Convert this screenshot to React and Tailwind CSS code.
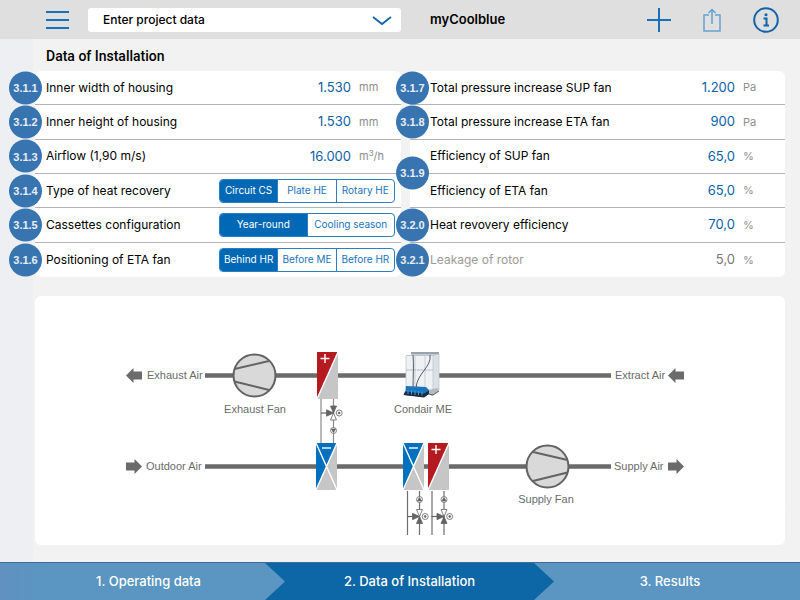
import clsx from "clsx";

const leftRows = [
    { badge: "3.1.1", label: "Inner width of housing", value: "1.530", unit: "mm" },
    { badge: "3.1.2", label: "Inner height of housing", value: "1.530", unit: "mm" },
    { badge: "3.1.3", label: "Airflow (1,90 m/s)", value: "16.000", unit: <>m<sup className="text-[8px]">3</sup>/h</> },
    { badge: "3.1.4", label: "Type of heat recovery", options: ["Circuit CS", "Plate HE", "Rotary HE"] },
    { badge: "3.1.5", label: "Cassettes configuration", options: ["Year-round", "Cooling season"] },
    { badge: "3.1.6", label: "Positioning of ETA fan", options: ["Behind HR", "Before ME", "Before HR"] },
];

const rightRows = [
    { badge: "3.1.7", label: "Total pressure increase SUP fan", value: "1.200", unit: "Pa" },
    { badge: "3.1.8", label: "Total pressure increase ETA fan", value: "900", unit: "Pa" },
    { badge: "3.1.9", label: "Efficiency of SUP fan", value: "65,0", unit: "%", shared: true },
    { label: "Efficiency of ETA fan", value: "65,0", unit: "%" },
    { badge: "3.2.0", label: "Heat revovery efficiency", value: "70,0", unit: "%" },
    { badge: "3.2.1", label: "Leakage of rotor", value: "5,0", unit: "%", disabled: true },
];

const Segmented = ({ name, options }) => (
    <div role="radiogroup" aria-label={name} className="mr-1.5 flex h-6 w-44 overflow-hidden rounded border border-[#2b7fc1] divide-x divide-[#2b7fc1]">
        {options.map((option, i) => (
            <label
                key={option}
                className="flex flex-1 cursor-pointer items-center justify-center whitespace-nowrap text-[10px] text-[#1a74bb] has-checked:bg-[#0068b4] has-checked:text-white"
            >
                <input type="radio" name={name} defaultChecked={i === 0} className="sr-only" />
                {option}
            </label>
        ))}
    </div>
);

const Row = ({ row, side }) => {
    const id = row.label.toLowerCase().replace(/[^a-z]+/g, "-");
    return (
        <div
            className={clsx(
                "relative flex items-center border-b border-[#b4b4b4] last:border-b-0",
                side === "left" ? "pl-[11px]" : "pl-5"
            )}
        >
            {row.badge && (
                <span
                    className={clsx(
                        "absolute z-10 flex size-[33px] -translate-y-1/2 items-center justify-center rounded-full bg-[#3875b0] font-['Liberation_Sans',sans-serif] text-[11px] font-bold text-[#e8eef5]",
                        side === "left" ? "-left-[26px]" : "-left-[14px]",
                        row.shared ? "top-full" : "top-1/2"
                    )}
                >
                    {row.badge}
                </span>
            )}
            {row.options ? (
                <>
                    <span className="flex-1 whitespace-nowrap">{row.label}</span>
                    <Segmented name={row.label} options={row.options} />
                </>
            ) : (
                <>
                    <label htmlFor={id} className={clsx("flex-1 whitespace-nowrap", row.disabled && "text-[#9a9a9a]")}>
                        {row.label}
                    </label>
                    <input
                        id={id}
                        type="text"
                        defaultValue={row.value}
                        disabled={row.disabled}
                        className="w-16 bg-transparent text-right text-[13px] text-[#0b62a9] disabled:text-[#777]"
                    />
                    <span className="w-[50px] pl-2 text-[11px] text-[#8e8e8e]">{row.unit}</span>
                </>
            )}
        </div>
    );
};

const Fan = ({ x, y, flip }) => (
    <g transform={`translate(${x} ${y}) scale(${flip ? -1 : 1} 1)`} stroke="#636363" strokeWidth="2">
        <circle r="21" fill="#d9d9d9" />
        <path d="M-20 -6.5 L14.5 -14.5 M-20 6 L14.5 14.5" fill="none" />
    </g>
);

const Arrow = ({ x, y, left }) => (
    <path
        transform={`translate(${x} ${y}) scale(${left ? -1 : 1} 1)`}
        d="M-8 -4 H0.5 V-7.5 L8 0 L0.5 7.5 V4 H-8 Z"
        fill="#6b6b6b"
    />
);

const Heater = ({ x, y }) => (
    <g transform={`translate(${x} ${y})`}>
        <rect width="21" height="47" fill="#c6c6c6" />
        <path d="M0 0 H21 L0 47 Z" fill="#b51a20" />
        <path d="M21 0 L0 47" stroke="#fff" strokeWidth="1.4" />
        <path d="M3.5 6.5 H12.5 M8 2 V11" stroke="#fff" strokeWidth="1.4" />
    </g>
);

const Cooler = ({ x, y }) => (
    <g transform={`translate(${x} ${y})`}>
        <rect width="21" height="47" fill="#c6c6c6" />
        <path d="M0 0 H21 L0 47 Z" fill="#0070bf" />
        <path d="M21 0 L0 47 M0 0 L21 47" stroke="#fff" strokeWidth="1.4" />
        <path d="M6 5 H15" stroke="#fff" strokeWidth="1.4" />
    </g>
);

const Valve = ({ x, y, up }) => (
    <g transform={`translate(${x} ${y})`} stroke="#636363" strokeWidth="0.8">
        <path d="M-12.5 0 H-7" strokeWidth="1.2" />
        <g transform={`scale(1 ${up ? -1 : 1})`}>
            <path d="M-3 -7 H3 L0 0 Z" fill={up ? "#636363" : "#636363"} />
            <path d="M-3 7 H3 L0 0 Z" fill="#fff" />
        </g>
        <path d="M-7 -3.2 V3.2 L0 0 Z" fill="#636363" />
        <circle cx="5.7" r="3" fill="#fff" />
        <circle cx="5.7" r="0.9" fill="#636363" />
    </g>
);

const Pump = ({ x, y, up }) => (
    <g transform={`translate(${x} ${y}) scale(1 ${up ? -1 : 1})`} stroke="#636363" strokeWidth="0.8">
        <circle r="3" fill="#fff" />
        <path d="M-2 -1.4 H2 L0 2 Z" fill="#636363" />
    </g>
);

const Humidifier = ({ x, y }) => (
    <g transform={`translate(${x} ${y})`}>
        <path d="M1 3 H7 V0 H34 V38 L28 41 L22 37 H1 Z" fill="#eff2f5" />
        <path d="M6 -1 H34 V1.5 H6 Z" fill="#98a3ae" />
        <path d="M1 2.5 H28 L34 1.5" fill="none" stroke="#b3bac2" strokeWidth="0.8" />
        <path d="M28 3 H34 V36 L28 39 Z" fill="#dbe0e6" />
        <path d="M1 3 V36 M10 3 V34 M20 3 V34 M28 3 V38 M34 1 V37" stroke="#c2c8cf" strokeWidth="0.8" />
        <path d="M1 17 H28" stroke="#aeb6be" strokeWidth="1" strokeDasharray="3 0.6" />
        <path d="M8 2 C9 12 8 24 8 35 M25 2 C27 14 12 20 11 35" fill="none" stroke="#535c66" strokeWidth="1" />
        <path d="M23 37 L33 35 L34 38 L27 43 L23 41 Z" fill="#b3bac2" />
        <path d="M24 41 L28 42 L34 38" fill="none" stroke="#3c434a" strokeWidth="0.8" />
        <path d="M1 33 L21 34 L24 37 V41 L19 44 L0 42 Z" fill="#1a75bd" />
        <path d="M0 38.5 L19 40.5 L24 37.5 V41 L19 44.5 L-1.5 42 Z" fill="#182c42" />
        <path d="M3 37 V41 M6.5 37 V41.5 M10 37.5 V42 M13.5 38 V42 M17 38.5 V42.5" stroke="#3d9be0" strokeWidth="1" />
    </g>
);

const Diagram = () => (
    <svg viewBox="0 0 750 249" className="block w-full" fontFamily="'Liberation Sans', Arial, sans-serif" fontSize="11" fill="#6b6b6b">
        <path d="M170 79.5 H576 M170 170.5 H576" stroke="#6b6b6b" strokeWidth="4.5" />

        <Arrow x={99} y={79.5} left />
        <text x="112" y="83">Exhaust Air</text>
        <text x="580" y="83">Extract Air</text>
        <Arrow x={641} y={79.5} left />

        <Arrow x={99} y={170.5} />
        <text x="111" y="174">Outdoor Air</text>
        <text x="579" y="174">Supply Air</text>
        <Arrow x={641} y={170.5} />

        <Fan x={219.5} y={79.5} />
        <text x="220" y="117" textAnchor="middle">Exhaust Fan</text>
        <Fan x={512.5} y={170.5} flip />
        <text x="511" y="207" textAnchor="middle">Supply Fan</text>

        {/* heat recovery circuit */}
        <path d="M286 103 V147 M298.5 103 V147" stroke="#8a8a8a" strokeWidth="1.2" />
        <Heater x={282} y={56} />
        <Cooler x={281} y={147} />
        <Valve x={298.5} y={117} />
        <Pump x={298.5} y={134.5} />

        <Humidifier x={370} y={57} />
        <text x="388" y="117" textAnchor="middle">Condair ME</text>

        {/* supply side coils */}
        <path d="M372.5 195 V239 M384.5 195 V239 M397 195 V239 M409 195 V239" stroke="#6f6f6f" strokeWidth="1.2" />
        <Cooler x={368} y={147} />
        <Heater x={393} y={147} />
        <Pump x={384.5} y={203.5} up />
        <Valve x={384.5} y={220.5} up />
        <Pump x={409} y={203.5} up />
        <Valve x={409} y={220.5} up />
    </svg>
);

const Header = () => (
    <header className="grid h-[39px] grid-cols-[366fr_375fr] gap-[9px] bg-[#dfdfdf] pr-[15px] pl-[35px]">
        <div className="flex items-center gap-[18px] pl-2.5">
            <button type="button" aria-label="Menu">
                <svg width="25" height="20" viewBox="0 0 25 20" stroke="#1770b8" strokeWidth="1.8">
                    <path d="M1 2 H24 M1 10 H24 M1 18 H24" />
                </svg>
            </button>
            <div className="relative flex-1">
                <select aria-label="Project" className="h-6 w-full appearance-none rounded-[3px] bg-white pl-[15px] text-[12px] font-medium">
                    <option>Enter project data</option>
                </select>
                <svg className="pointer-events-none absolute top-2 right-[9px]" width="20" height="10" viewBox="0 0 20 10" fill="none" stroke="#1165ae" strokeWidth="1.8">
                    <path d="M1 1 L10 8 L19 1" />
                </svg>
            </div>
        </div>
        <div className="flex items-center justify-between pr-1.5 pl-5">
            <h1 className="text-[13px] font-semibold">myCoolblue</h1>
            <div className="flex items-center gap-8">
                <button type="button" aria-label="Add">
                    <svg width="24" height="24" viewBox="0 0 24 24" stroke="#1770b8" strokeWidth="2">
                        <path d="M12 0 V24 M0 12 H24" />
                    </svg>
                </button>
                <button type="button" aria-label="Share">
                    <svg width="18" height="24" viewBox="0 0 18 24" fill="none" stroke="#65a3d2" strokeWidth="1.5">
                        <path d="M6 7 H1 V23 H17 V7 H12 M9 16 V1.5 M5.5 5 L9 1.5 L12.5 5" />
                    </svg>
                </button>
                <button type="button" aria-label="Info">
                    <svg width="26" height="26" viewBox="0 0 26 26" fill="none" stroke="#1063ad" strokeWidth="2">
                        <circle cx="13" cy="13" r="11.8" />
                        <path d="M10.5 11.5 H13.5 V18.5 M10.5 18.5 H16" />
                        <circle cx="13" cy="7.8" r="1.5" fill="#1063ad" stroke="none" />
                    </svg>
                </button>
            </div>
        </div>
    </header>
);

const Steps = () => (
    <nav className="flex h-[38px] border-t border-[#3b6c93] bg-[#5a96c1] text-[13px] font-medium text-white">
        <a
            href="#operating"
            className="z-20 flex flex-[285] items-center justify-center bg-linear-to-r from-[#5f90c0] to-[#5a96c1] to-15% [clip-path:polygon(0_0,calc(100%-20px)_0,100%_50%,calc(100%-20px)_100%,0_100%)]"
        >
            <span className="pl-3">1. Operating data</span>
        </a>
        <a
            href="#installation"
            aria-current="step"
            className="z-10 -ml-5 flex flex-[289] items-center justify-center bg-[#0d66a5] [clip-path:polygon(0_0,calc(100%-20px)_0,100%_50%,calc(100%-20px)_100%,0_100%)]"
        >
            2. Data of Installation
        </a>
        <a href="#results" className="-ml-5 flex flex-[266] items-center justify-center">
            <span className="pl-1.5">3. Results</span>
        </a>
    </nav>
);

export default function App() {
    return (
        <div className="flex min-h-screen flex-col bg-[#f2f2f2] font-[Inter,sans-serif] text-[12px] text-black">
            <Header />
            <main className="flex-1 bg-linear-to-r from-[#eeeff2] from-[33px] to-[#f2f2f2] to-[33px] pr-[15px] pb-4 pl-[35px]">
                <h2 className="flex h-8 items-center pt-0.5 pl-[11px] font-[Roboto,sans-serif] text-[14px] font-medium">Data of Installation</h2>
                <div className="grid grid-cols-[366fr_375fr] gap-[9px]">
                    <section className="grid min-h-[206px] auto-rows-fr rounded-md bg-white">
                        {leftRows.map((row) => <Row key={row.label} row={row} side="left" />)}
                    </section>
                    <section className="grid min-h-[206px] auto-rows-fr rounded-md bg-white">
                        {rightRows.map((row) => <Row key={row.label} row={row} side="right" />)}
                    </section>
                </div>
                <section className="mt-[19px] rounded-md bg-white">
                    <Diagram />
                </section>
            </main>
            <Steps />
        </div>
    );
}
